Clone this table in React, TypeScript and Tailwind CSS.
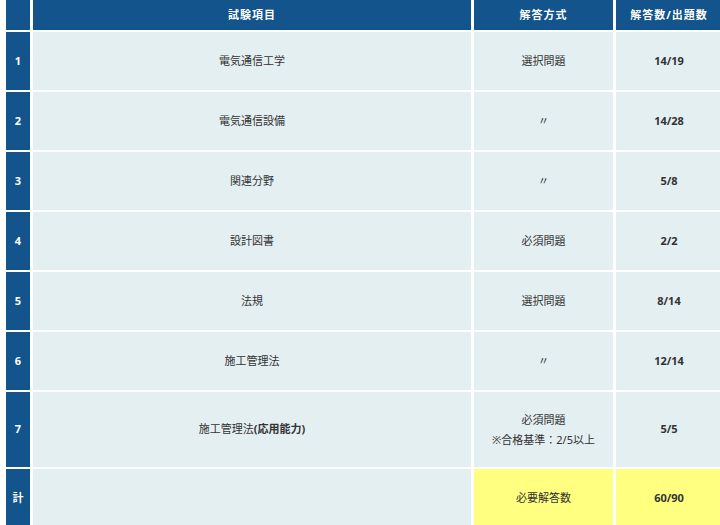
const rows: { no: string; item: React.ReactNode; method: React.ReactNode; count: string; h?: string }[] = [
  { no: "1", item: "電気通信工学", method: "選択問題", count: "14/19" },
  { no: "2", item: "電気通信設備", method: "〃", count: "14/28" },
  { no: "3", item: "関連分野", method: "〃", count: "5/8" },
  { no: "4", item: "設計図書", method: "必須問題", count: "2/2" },
  { no: "5", item: "法規", method: "選択問題", count: "8/14" },
  { no: "6", item: "施工管理法", method: "〃", count: "12/14" },
  {
    no: "7",
    item: (
      <>
        施工管理法<span className="font-bold">(応用能力)</span>
      </>
    ),
    method: (
      <span className="leading-[20px]">
        必須問題
        <br />
        ※合格基準：2/5以上
      </span>
    ),
    count: "5/5",
    h: "h-[75px]",
  },
];

export default function App() {
  return (
    <div
      className="w-[720px] h-[525px] overflow-hidden bg-white text-[11px] text-[#333]"
      style={{ fontFamily: '"Noto Sans", "Noto Sans CJK JP", sans-serif' }}
    >
      <div className="grid grid-cols-[24px_438px_139px_106px] gap-x-[3px] gap-y-[2px] pl-[6px]">
        {/* header */}
        <div className="h-[30px] bg-[#12548b]" />
        <div className="h-[30px] bg-[#12548b] flex items-center justify-center text-white font-bold tracking-[1px]">試験項目</div>
        <div className="h-[30px] bg-[#12548b] flex items-center justify-center text-white font-bold tracking-[1px]">解答方式</div>
        <div className="h-[30px] bg-[#12548b] flex items-center justify-center text-white font-bold tracking-[1px]">解答数/出題数</div>

        {rows.map((r) => (
          <div key={r.no} className="contents">
            <div className={`${r.h ?? "h-[58px]"} bg-[#12548b] flex items-center justify-center text-white font-bold`}>{r.no}</div>
            <div className={`${r.h ?? "h-[58px]"} bg-[#e4eff1] flex items-center justify-center`}>{r.item}</div>
            <div className={`${r.h ?? "h-[58px]"} bg-[#e4eff1] flex items-center justify-center text-center`}>{r.method}</div>
            <div className={`${r.h ?? "h-[58px]"} bg-[#e4eff1] flex items-center justify-center font-bold`}>{r.count}</div>
          </div>
        ))}

        {/* total */}
        <div className="h-[58px] bg-[#12548b] flex items-center justify-center text-white font-bold">計</div>
        <div className="h-[58px] bg-[#e4eff1]" />
        <div className="h-[58px] bg-[#ffff80] flex items-center justify-center">必要解答数</div>
        <div className="h-[58px] bg-[#ffff80] flex items-center justify-center font-bold">60/90</div>
      </div>
    </div>
  );
}
